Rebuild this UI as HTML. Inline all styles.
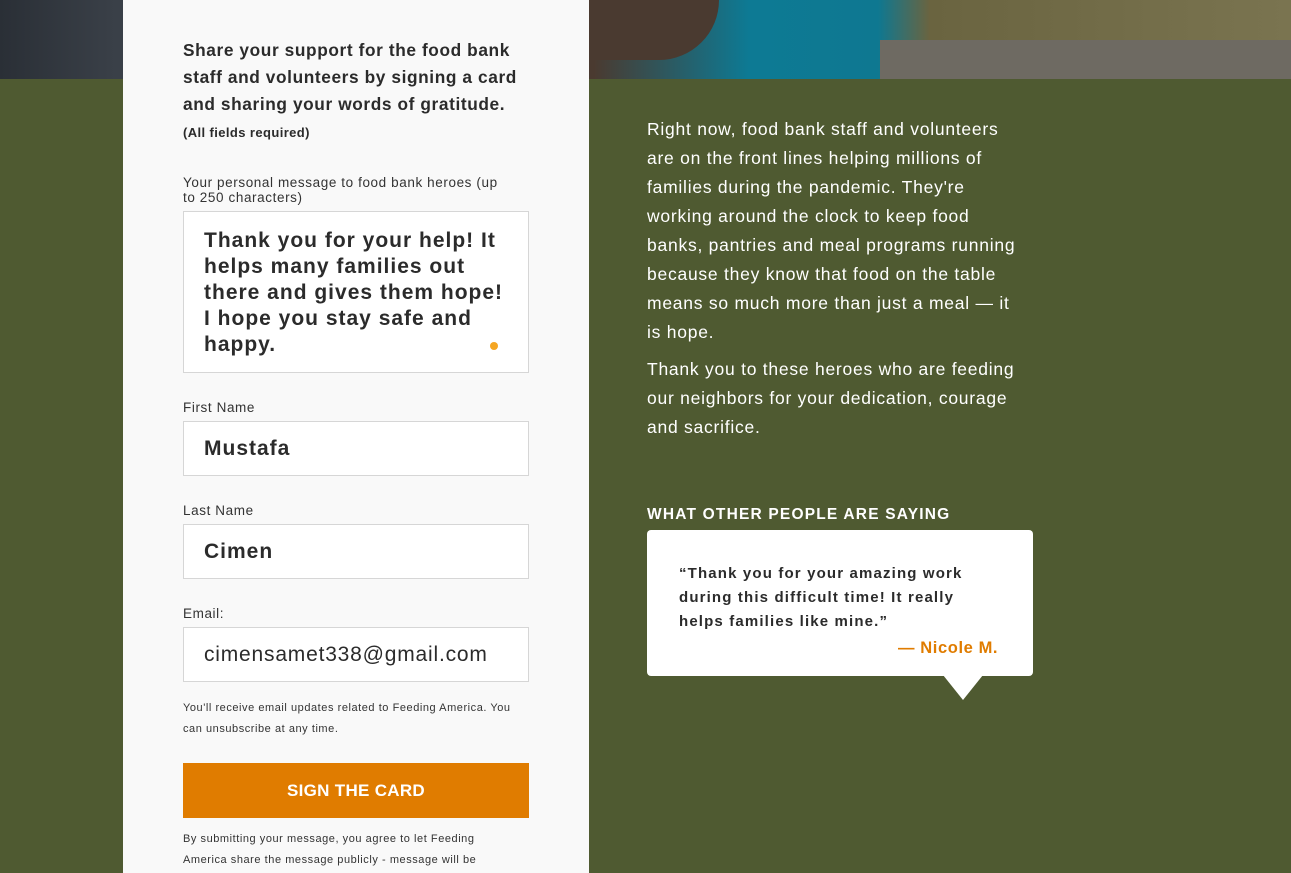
<!DOCTYPE html>
<html><head><meta charset="utf-8"><style>
*{margin:0;padding:0;box-sizing:border-box}
body{width:1291px;height:873px;overflow:hidden;background:#4f5a31;font-family:"Liberation Sans",sans-serif;position:relative}
.photo{position:absolute;left:0;top:0;width:1291px;height:79px;background:linear-gradient(90deg,#2a2f36 0%,#3a4048 9%,#4a3a30 46%,#0d7a94 58%,#0e7891 68%,#6a6440 72%,#7a7450 100%)}
.ph2{position:absolute;left:880px;top:40px;width:411px;height:39px;background:#6e6a62}
.ph3{position:absolute;left:589px;top:0;width:130px;height:60px;background:#4a3a30;border-radius:0 0 60px 0}
.panel{position:absolute;left:123px;top:0;width:466px;height:873px;background:#f9f9f9}
.abs{position:absolute;white-space:nowrap}
.intro{left:183px;top:37px;font-size:17.3px;font-weight:bold;line-height:27px;color:#2b2b2b;letter-spacing:0.6px}
.req{left:183px;top:125px;font-size:13px;font-weight:bold;color:#2b2b2b;letter-spacing:0.4px}
.lbl{font-size:13.5px;color:#333;line-height:15px;letter-spacing:0.6px}
.box{background:#fff;border:1px solid #d6d6d6;left:183px;width:346px}
.val{font-size:21px;font-weight:bold;color:#2b2b2b;letter-spacing:1px}
.small{font-size:11px;color:#333;line-height:21px;letter-spacing:0.55px}
.btn{left:183px;top:763px;width:346px;height:55px;background:#e07c00;color:#fff;font-weight:bold;font-size:17px;text-align:center;line-height:55px;letter-spacing:0.3px}
.right{left:647px;color:#fff;font-size:17.5px;line-height:29px;letter-spacing:0.75px}
.quote{left:647px;top:530px;width:386px;height:146px;background:#fff;border-radius:4px}
</style></head><body>
<div class="photo"></div><div class="ph3"></div><div class="ph2"></div>
<div class="panel"></div>
<div class="abs intro">Share your support for the food bank<br>staff and volunteers by signing a card<br>and sharing your words of gratitude.</div>
<div class="abs req">(All fields required)</div>
<div class="abs lbl" style="left:183px;top:175px">Your personal message to food bank heroes (up<br>to 250 characters)</div>
<div class="abs box" style="top:211px;height:162px"></div>
<div class="abs val" style="left:204px;top:228px;line-height:26px">Thank you for your help! It<br>helps many families out<br>there and gives them hope!<br>I hope you stay safe and<br>happy.</div>
<div class="abs" style="left:490px;top:342px;width:8px;height:8px;border-radius:50%;background:#f5a623"></div>
<div class="abs lbl" style="left:183px;top:400px">First Name</div>
<div class="abs box" style="top:421px;height:55px"></div>
<div class="abs val" style="left:204px;top:437px">Mustafa</div>
<div class="abs lbl" style="left:183px;top:503px">Last Name</div>
<div class="abs box" style="top:524px;height:55px"></div>
<div class="abs val" style="left:204px;top:540px">Cimen</div>
<div class="abs lbl" style="left:183px;top:606px">Email:</div>
<div class="abs box" style="top:627px;height:55px"></div>
<div class="abs val" style="left:204px;top:643px;font-weight:normal;letter-spacing:0.8px">cimensamet338@gmail.com</div>
<div class="abs small" style="left:183px;top:698px">You'll receive email updates related to Feeding America. You<br>can unsubscribe at any time.</div>
<div class="abs btn">SIGN THE CARD</div>
<div class="abs small" style="left:183px;top:829px">By submitting your message, you agree to let Feeding<br>America share the message publicly - message will be</div>
<div class="abs right" style="top:115px">Right now, food bank staff and volunteers<br>are on the front lines helping millions of<br>families during the pandemic. They're<br>working around the clock to keep food<br>banks, pantries and meal programs running<br>because they know that food on the table<br>means so much more than just a meal — it<br>is hope.</div>
<div class="abs right" style="top:355px">Thank you to these heroes who are feeding<br>our neighbors for your dedication, courage<br>and sacrifice.</div>
<div class="abs" style="left:647px;top:506px;color:#fff;font-weight:bold;font-size:15.5px;letter-spacing:1.2px">WHAT OTHER PEOPLE ARE SAYING</div>
<div class="abs quote"></div>
<div class="abs" style="left:943px;top:675px;width:0;height:0;border-left:20px solid transparent;border-right:20px solid transparent;border-top:25px solid #fff"></div>
<div class="abs" style="left:679px;top:562px;font-size:15px;font-weight:bold;color:#2b2b2b;line-height:24px;letter-spacing:1.15px">“Thank you for your amazing work<br>during this difficult time! It really<br>helps families like mine.”</div>
<div class="abs" style="left:898px;top:639px;font-size:16.5px;font-weight:bold;color:#e07c00;letter-spacing:0.6px">— Nicole M.</div>
</body></html>
